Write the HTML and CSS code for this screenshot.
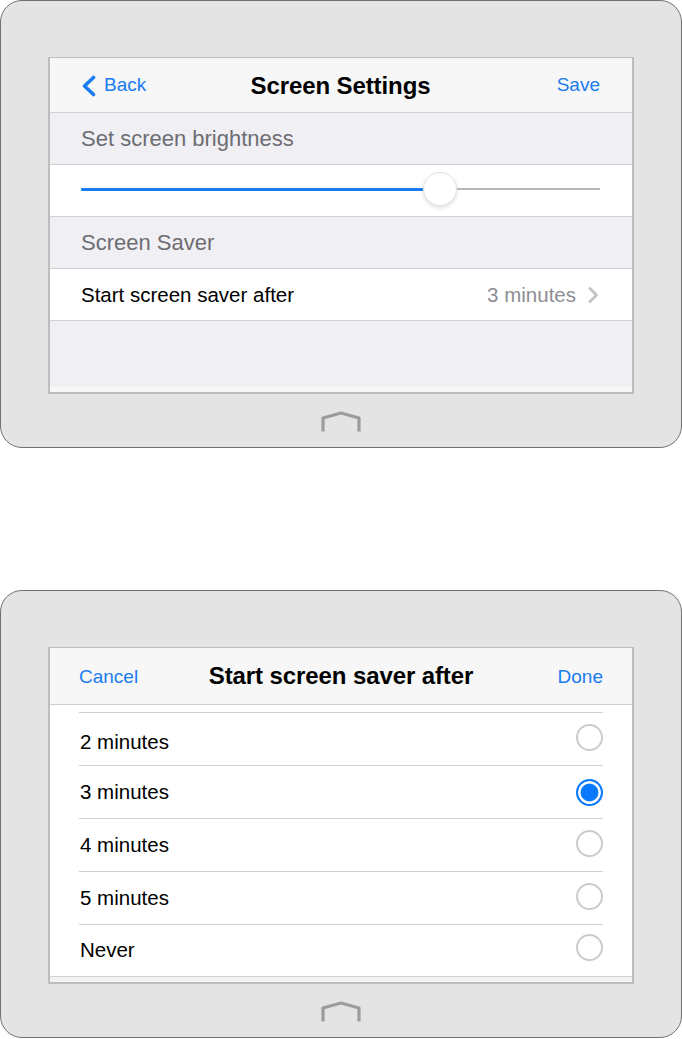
FILE: index.html
```html
<!DOCTYPE html>
<html>
<head>
<meta charset="utf-8">
<link rel="stylesheet" href="styles.css">
</head>
<body>
<div class="page">
  <div class="device">
    <div class="screen">
      <div class="navbar navbar-wide">
        <span class="nav-btn nav-left">
          <svg class="back-chevron" width="15" height="22" viewBox="0 0 15 22"><path d="M12.5 2.5 L3.5 11 L12.5 19.5" fill="none" stroke="#1a7cf0" stroke-width="3.6" stroke-linecap="round" stroke-linejoin="round"/></svg>
          Back
        </span>
        <span class="nav-title">Screen Settings</span>
        <span class="nav-btn nav-right">Save</span>
      </div>
      <div class="section-header">Set screen brightness</div>
      <div class="row slider-row">
        <div class="slider">
          <div class="slider-fill" style="width:342px"></div>
          <div class="slider-thumb"></div>
          <div class="slider-rest"></div>
        </div>
      </div>
      <div class="section-header">Screen Saver</div>
      <div class="row">
        <span class="row-label">Start screen saver after</span>
        <span class="row-value">3 minutes
          <svg class="disclosure" width="12" height="18" viewBox="0 0 12 18"><path d="M3 2.5 L9.5 9 L3 15.5" fill="none" stroke="#c4c4c9" stroke-width="3" stroke-linecap="round" stroke-linejoin="round"/></svg>
        </span>
      </div>
      <div class="filler"></div>
      <div class="screen-foot"></div>
    </div>
    <svg class="home" width="42" height="22" viewBox="0 0 42 22"><path d="M3 20.5 V7 L21 2 L39 7 V20.5" fill="none" stroke="#9c9c9c" stroke-width="3.2" stroke-linejoin="round"/></svg>
  </div>

  <div class="device">
    <div class="screen">
      <div class="navbar navbar-narrow">
        <span class="nav-btn nav-left">Cancel</span>
        <span class="nav-title">Start screen saver after</span>
        <span class="nav-btn nav-right">Done</span>
      </div>
      <div class="list">
        <div class="option option-first"><span>2 minutes</span><span class="radio"></span></div>
        <div class="option"><span>3 minutes</span><span class="radio radio-on"></span></div>
        <div class="option"><span>4 minutes</span><span class="radio"></span></div>
        <div class="option"><span>5 minutes</span><span class="radio"></span></div>
        <div class="option option-last"><span>Never</span><span class="radio"></span></div>
      </div>
      <div class="screen-foot list-foot"></div>
    </div>
    <svg class="home" width="42" height="22" viewBox="0 0 42 22"><path d="M3 20.5 V7 L21 2 L39 7 V20.5" fill="none" stroke="#9c9c9c" stroke-width="3.2" stroke-linejoin="round"/></svg>
  </div>
</div>
</body>
</html>
```
FILE: styles.css
```css
* { box-sizing: border-box; }
html, body { margin: 0; padding: 0; background: #ffffff; }
body { font-family: "Liberation Sans", Arial, sans-serif; color: #000; }

.page { display: flex; flex-direction: column; gap: 142px; width: 682px; }

.device {
  width: 682px;
  height: 448px;
  background: #e4e4e4;
  border: 1px solid #707070;
  border-radius: 22px;
  padding: 56px 47px 0 47px;
  display: flex;
  flex-direction: column;
  align-items: center;
}

.screen {
  width: 586px;
  height: 337px;
  border: 2px solid #bdbdbd;
  border-top-width: 1px;
  background: #efeff4;
  display: flex;
  flex-direction: column;
  overflow: hidden;
}

.navbar {
  height: 55px;
  flex: 0 0 55px;
  background: #f7f7f7;
  border-bottom: 1px solid #cfcfd2;
  display: grid;
  grid-template-columns: 1fr auto 1fr;
  align-items: center;
}
.navbar-wide { padding: 0 32px 0 31px; }
.navbar-narrow { padding: 0 29px 0 29px; height: 57px; flex-basis: 57px; }

.nav-btn { color: #1a7cf0; font-size: 19px; display: flex; align-items: center; }
.navbar-narrow .nav-btn { padding-top: 2px; }
.nav-left { justify-self: start; }
.nav-right { justify-self: end; }
.back-chevron { margin-right: 8px; margin-top: 1px; }
.nav-title { font-weight: bold; font-size: 24px; letter-spacing: -0.1px; }
.navbar-wide .nav-title { padding-top: 1px; }

.section-header {
  height: 52px;
  flex: 0 0 52px;
  background: #efeff4;
  border-bottom: 1px solid #cfcfd2;
  padding: 0 31px;
  display: flex;
  align-items: center;
  color: #6d6d72;
  font-size: 22px;
}

.row {
  height: 52px;
  flex: 0 0 52px;
  background: #ffffff;
  border-bottom: 1px solid #cfcfd2;
  padding: 0 32px 0 31px;
  display: flex;
  align-items: center;
  justify-content: space-between;
  font-size: 20.5px;
}
.row-value { color: #8e8e93; display: flex; align-items: center; gap: 11px; margin-right: 1px; }

.slider-row { padding: 0 32px 3px 31px; }
.slider { display: flex; align-items: center; width: 519px; }
.slider-fill { height: 3px; background: #1a7cf0; border-radius: 1px; }
.slider-thumb {
  width: 34px; height: 34px; border-radius: 50%;
  background: #ffffff;
  border: 1px solid #e2e2e2;
  box-shadow: 0 2px 4px rgba(0,0,0,0.12);
  flex: 0 0 34px;
}
.slider-rest { flex: 1; height: 2px; background: #b8b8b8; }

.filler { flex: 1; background: #efeff4; }
.screen-foot { flex: 0 0 5px; background: #f7f7f7; }

.list { flex: 1; background: #ffffff; padding: 7px 29px 0 29px; display: flex; flex-direction: column; }
.list::before { content: ""; display: block; height: 1px; background: #d2d2d4; }
.option {
  height: 53px;
  border-bottom: 1px solid #d2d2d4;
  display: flex;
  align-items: center;
  justify-content: space-between;
  font-size: 20.5px;
  padding-left: 1px;
}
.option-first { padding-top: 5px; }
.option-first .radio { margin-top: -8px; }
.option-last { height: 51px; border-bottom: none; padding-bottom: 2px; }
.list-foot { flex: 0 0 8px; background: #f2f2f2; border-top: 1px solid #d2d2d4; }

.radio {
  width: 27px; height: 27px; border-radius: 50%;
  border: 2px solid #cbcbcb;
  background: #fff;
  margin-top: -4px;
}
.radio-on {
  border-color: #0a7afc;
  background: #0a7afc;
  box-shadow: inset 0 0 0 2.5px #ffffff;
  margin-top: 0;
}

.home { margin-top: 17px; }
```
